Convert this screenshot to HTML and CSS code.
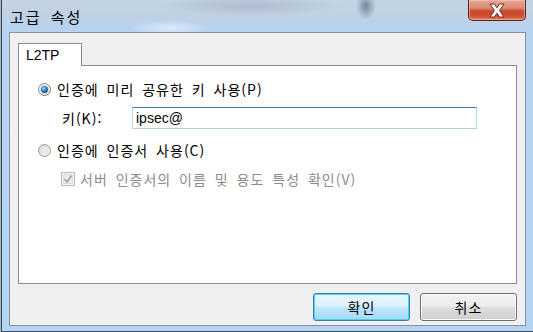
FILE: index.html
```html
<!DOCTYPE html>
<html lang="ko">
<head>
    <meta charset="UTF-8">
    <title>고급 속성</title>
    <link rel="stylesheet" href="styles.css">
</head>
<body>
    <div class="window">
        <div class="titlebar">
            <span class="title">고급 속성</span>
            <div class="close">
                <svg width="22" height="15" viewBox="0 0 22 15">
                    <path d="M4 1 L8.5 1 L11 4.8 L13.5 1 L18 1 L13.6 7.5 L18 14 L13.5 14 L11 10.2 L8.5 14 L4 14 L8.4 7.5 Z" fill="#ffffff" stroke="#6a2a20" stroke-width="1" stroke-linejoin="round"/>
                </svg>
            </div>
        </div>

        <div class="client">
            <div class="tabs">
                <div class="tab">L2TP</div>
            </div>
            <div class="panel">
                <div class="option first">
                    <svg class="radio" width="13" height="13" viewBox="0 0 13 13">
                        <defs>
                            <linearGradient id="ring" x1="0" y1="0" x2="1" y2="1">
                                <stop offset="0" stop-color="#9a9a9a"/>
                                <stop offset="1" stop-color="#6e6e6e"/>
                            </linearGradient>
                            <radialGradient id="dot" cx="0.4" cy="0.35" r="0.7">
                                <stop offset="0" stop-color="#9fe0ff"/>
                                <stop offset="0.45" stop-color="#2f8fd6"/>
                                <stop offset="1" stop-color="#0d3f7a"/>
                            </radialGradient>
                        </defs>
                        <circle cx="6.5" cy="6.5" r="6" fill="#f0f0f0" stroke="url(#ring)" stroke-width="1"/>
                        <circle cx="6.5" cy="6.5" r="4.6" fill="#dcdcdc"/>
                        <circle cx="6.5" cy="6.5" r="3.4" fill="url(#dot)"/>
                    </svg>
                    <span>인증에 미리 공유한 키 사용(P)</span>
                </div>

                <div class="key-row">
                    <span class="key-label">키(K):</span>
                    <div class="field">ipsec@</div>
                </div>

                <div class="option second">
                    <svg class="radio" width="13" height="13" viewBox="0 0 13 13">
                        <defs>
                            <linearGradient id="fill2" x1="0" y1="0" x2="1" y2="1">
                                <stop offset="0" stop-color="#d4d4d4"/>
                                <stop offset="1" stop-color="#f8f8f8"/>
                            </linearGradient>
                        </defs>
                        <circle cx="6.5" cy="6.5" r="6" fill="url(#fill2)" stroke="#9c9c9c" stroke-width="1"/>
                        <circle cx="6.5" cy="6.5" r="4" fill="#e9e9e9"/>
                    </svg>
                    <span>인증에 인증서 사용(C)</span>
                </div>

                <div class="check-row">
                    <svg class="check" width="14" height="14" viewBox="0 0 14 14">
                        <rect x="0.5" y="0.5" width="13" height="13" fill="#f4f4f4" stroke="#bcbcbc"/>
                        <rect x="2.5" y="2.5" width="9" height="9" fill="#ececec" stroke="#dcdcdc"/>
                        <path d="M3.5 7 L6 10 L10.5 3.5" fill="none" stroke="#a9a9a9" stroke-width="1.8"/>
                    </svg>
                    <span>서버 인증서의 이름 및 용도 특성 확인(V)</span>
                </div>
            </div>

            <div class="buttons">
                <button class="btn default">확인</button>
                <button class="btn">취소</button>
            </div>
        </div>
    </div>
</body>
</html>
```

FILE: styles.css
```css
body {
    margin: 0;
    font-family: "Noto Sans CJK KR", "Liberation Sans", sans-serif;
    font-size: 14px;
    color: #000;
}

.window {
    width: 533px;
    height: 332px;
    box-sizing: border-box;
    overflow: hidden;
    background:
        radial-gradient(ellipse 10px 14px at 366px 6px, rgba(60, 75, 95, 0.55), rgba(60, 75, 95, 0) 100%),
        radial-gradient(ellipse 40px 8px at 170px 28px, rgba(230, 240, 250, 0.8), rgba(230, 240, 250, 0) 100%),
        radial-gradient(ellipse 90px 10px at 250px 6px, rgba(150, 165, 185, 0.5), rgba(150, 165, 185, 0) 100%),
        linear-gradient(to bottom, #c5d4e4 0, #bdd1e6 18px, #b6d3f1 32px, #b3d4f4 100%);
    box-shadow: inset 1px 0 #a8b8c8, inset 2px 0 #34414f, inset 0 -1px #41505f;
}

.titlebar {
    height: 32px;
    display: flex;
    justify-content: space-between;
    align-items: flex-start;
    padding: 0 7px 0 10px;
}

.title {
    font-size: 15px;
    line-height: 18px;
    padding-top: 8px;
    letter-spacing: 2px;
    word-spacing: 3px;
}

.close {
    width: 58px;
    height: 21px;
    box-sizing: border-box;
    border: 1px solid #5b2319;
    border-top: none;
    border-radius: 0 0 5px 5px;
    background: linear-gradient(to bottom, #e9a797 0, #d98a75 40%, #c9482d 55%, #cf4f32 80%, #e0805f 100%);
    box-shadow: inset 0 0 0 1px rgba(255, 200, 190, 0.5);
    display: flex;
    align-items: center;
    justify-content: center;
}

.client {
    margin: 0 7px 0 9px;
    height: 294px;
    box-sizing: border-box;
    border: 1px solid #8693a2;
    background-color: #f0f0f0;
    padding: 10px 8px 4px 8px;
    display: flex;
    flex-direction: column;
}

.tabs {
    display: flex;
}

.tab {
    width: 64px;
    height: 23px;
    box-sizing: border-box;
    border: 1px solid #898c95;
    border-bottom: none;
    background-color: #fff;
    margin-bottom: -1px;
    position: relative;
    padding-left: 7px;
    font-family: "Liberation Sans", sans-serif;
    font-size: 14px;
    line-height: 22px;
}

.panel {
    width: 499px;
    height: 219px;
    box-sizing: border-box;
    border: 1px solid #898c95;
    background-color: #fff;
    padding-top: 13px;
    display: flex;
    flex-direction: column;
    letter-spacing: 1px;
    word-spacing: 3px;
}

.option {
    display: flex;
    align-items: center;
    height: 20px;
    padding-left: 19px;
}

.option .radio {
    margin-right: 6px;
}

.key-row {
    display: flex;
    align-items: center;
    margin-top: 8px;
    padding-left: 43px;
}

.key-label {
    width: 70px;
}

.field {
    width: 345px;
    height: 22px;
    box-sizing: border-box;
    border: 1px solid #b5cfe7;
    border-top-color: #3d7bad;
    padding-left: 3px;
    font-family: "Liberation Sans", sans-serif;
    font-size: 14px;
    line-height: 20px;
    letter-spacing: 0;
}

.option.second {
    margin-top: 11px;
}

.check-row {
    display: flex;
    align-items: center;
    height: 20px;
    margin-top: 9px;
    padding-left: 42px;
    color: #8d8d8d;
}

.check-row .check {
    margin-right: 5px;
}

.buttons {
    display: flex;
    justify-content: flex-end;
    gap: 10px;
    margin-top: 9px;
    width: 499px;
}

.btn {
    width: 97px;
    height: 28px;
    box-sizing: border-box;
    border: 1px solid #707070;
    border-radius: 3px;
    background: linear-gradient(to bottom, #f2f2f2 0, #ebebeb 48%, #dddddd 52%, #cfcfcf 100%);
    box-shadow: inset 0 0 0 1px #fcfcfc;
    font-family: "Noto Sans CJK KR", sans-serif;
    font-size: 14px;
    letter-spacing: 1px;
    padding: 0;
    color: #000;
}

.btn.default {
    border-color: #3c7fb1;
    background: linear-gradient(to bottom, #eaf6fd 0, #d9f0fc 48%, #bee6fd 52%, #a7d9f5 100%);
    box-shadow: inset 0 0 0 1px #48d3f7;
}
```
